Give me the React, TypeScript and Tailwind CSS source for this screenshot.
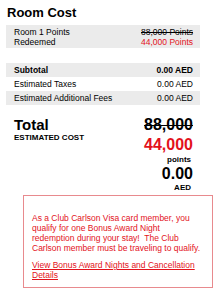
export default function App() {
  return (
    <div className="w-[223px] h-[300px] bg-white font-['Liberation_Sans',Arial,sans-serif] text-black">
      <div className="px-[7px] pt-[5px] text-[13px] font-bold leading-[15px]">Room Cost</div>

      <div className="mx-[6px] mt-[5px] w-[194px] bg-[#ebebeb] pl-[8px] pr-[7px] pt-[2px] pb-[1px] text-[8.5px] leading-[10px]">
        <div className="flex justify-between">
          <span>Room 1 Points</span>
          <span className="line-through">88,000 Points</span>
        </div>
        <div className="flex justify-between">
          <span>Redeemed</span>
          <span className="text-[#e3121b]">44,000 Points</span>
        </div>
      </div>

      <div className="mx-[6px] mt-[15px] w-[194px] text-[8.5px] leading-[14px]">
        <div className="flex justify-between bg-[#ebebeb] pl-[8px] pr-[7px] font-bold">
          <span>Subtotal</span>
          <span>0.00 AED</span>
        </div>
        <div className="flex justify-between pl-[8px] pr-[7px]">
          <span>Estimated Taxes</span>
          <span>0.00 AED</span>
        </div>
        <div className="flex justify-between bg-[#ebebeb] pl-[8px] pr-[7px]">
          <span>Estimated Additional Fees</span>
          <span>0.00 AED</span>
        </div>
      </div>

      <div className="mt-[10px] flex justify-between pl-[14px] pr-[30px]">
        <div className="pt-[2px]">
          <div className="text-[15px] font-bold leading-[16px]">Total</div>
          <div className="text-[8px] font-bold leading-[10px]">ESTIMATED COST</div>
        </div>
        <div className="flex flex-col items-end font-bold">
          <div className="text-[16px] leading-[20px] line-through">88,000</div>
          <div className="text-[16px] leading-[20px] text-[#e3121b]">44,000</div>
          <div className="pr-[2px] text-[8px] leading-[10px]">points</div>
          <div className="text-[16px] leading-[18px]">0.00</div>
          <div className="pr-[2px] text-[8px] leading-[10px]">AED</div>
        </div>
      </div>

      <div className="ml-[23px] mt-[2px] w-[190px] h-[93px] border border-[#e88a8e] pl-[8px] pr-[8px] pt-[17px] text-[8.5px] leading-[10px] text-[#e3121b]">
        <p>
          As a Club Carlson Visa card member, you qualify for one Bonus Award Night redemption during your stay!&nbsp; The Club Carlson member must be traveling to qualify.
        </p>
        <a href="#" className="mt-[7px] block underline">
          View Bonus Award Nights and Cancellation Details
        </a>
      </div>
    </div>
  );
}
